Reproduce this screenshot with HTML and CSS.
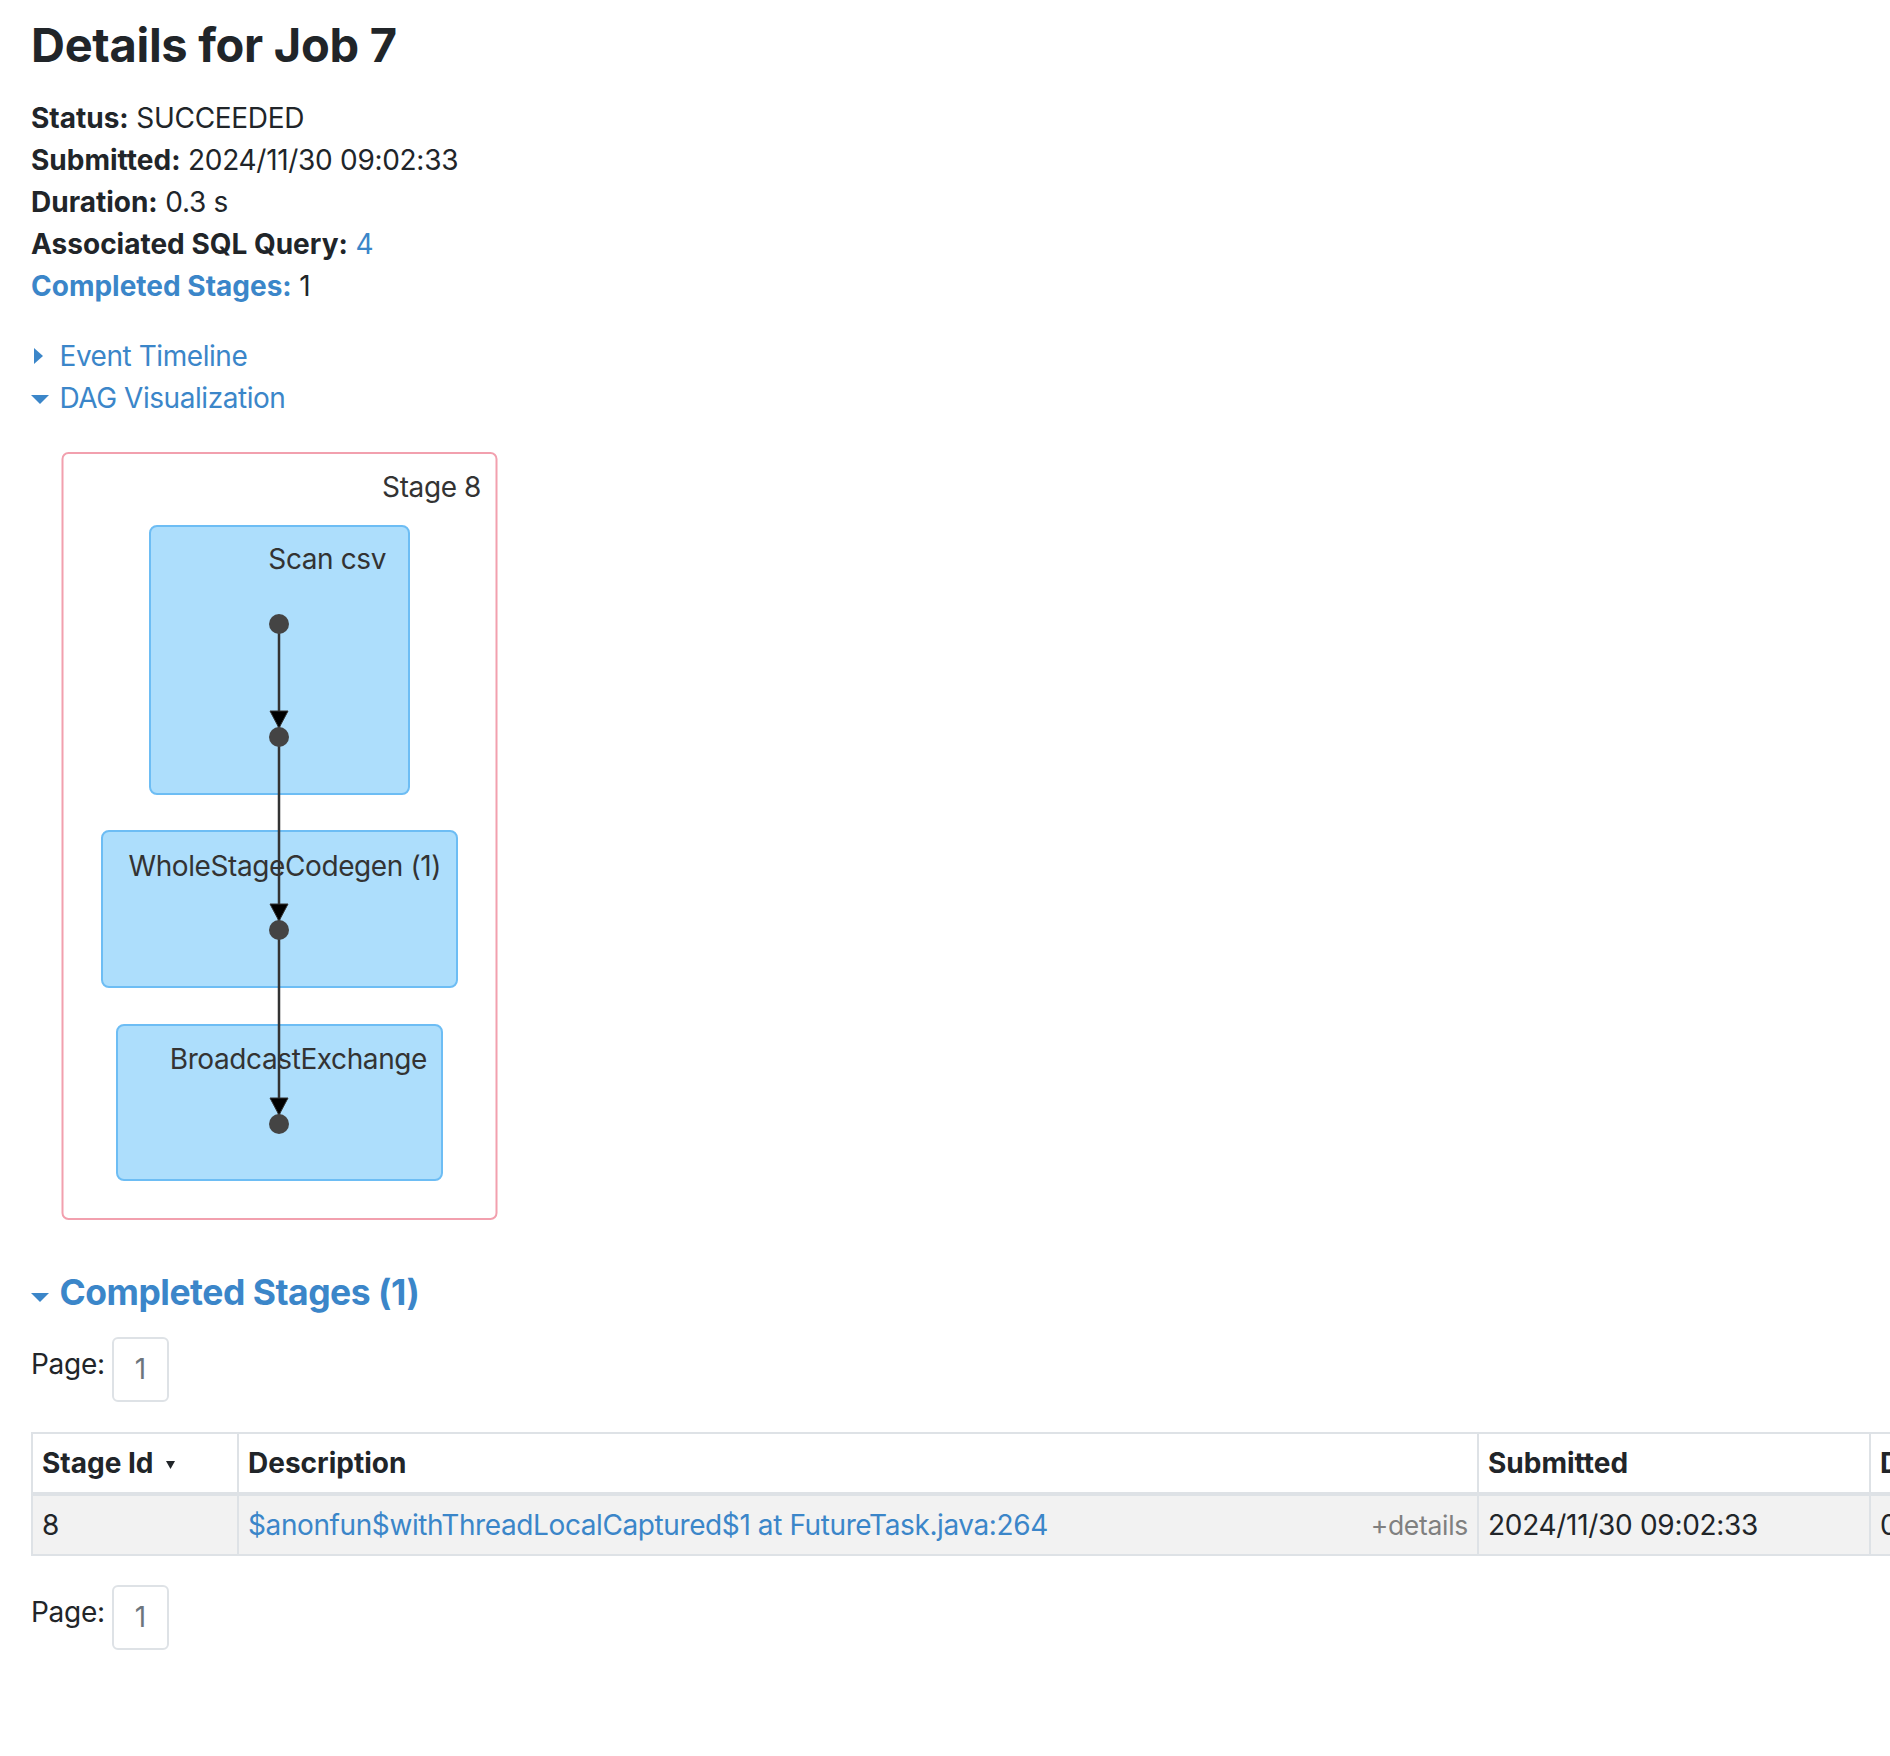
FILE: index.html
```html
<!DOCTYPE html>
<html lang="en">
<head>
<meta charset="utf-8">
<title>Details for Job 7</title>
<link rel="stylesheet" href="styles.css">
</head>
<body>
<div class="page">
  <h3 class="title">Details for Job 7</h3>
  <ul class="summary">
    <li><strong>Status:</strong> SUCCEEDED</li>
    <li><strong>Submitted:</strong> 2024/11/30 09:02:33</li>
    <li><strong>Duration:</strong> 0.3 s</li>
    <li><strong>Associated SQL Query:</strong> <a href="#">4</a></li>
    <li><a class="strong-link" href="#">Completed Stages:</a> 1</li>
  </ul>

  <div class="toggles">
    <div class="toggle">
      <span class="toggle-icon"><span class="arrow-closed"></span></span>
      <a href="#">Event Timeline</a>
    </div>
    <div class="toggle">
      <span class="toggle-icon"><span class="arrow-open"></span></span>
      <a href="#">DAG Visualization</a>
    </div>
  </div>

  <svg class="dag" width="500" height="822" viewBox="31 418 500 822" xmlns="http://www.w3.org/2000/svg">
    <rect class="stage" x="62.5" y="452" width="434" height="766" rx="6" ry="6"/>
    <text class="label" x="481" y="496" text-anchor="end">Stage 8</text>

    <rect class="cluster" x="150" y="525" width="259" height="268" rx="7" ry="7"/>
    <text class="label" x="386" y="568" text-anchor="end">Scan csv</text>

    <rect class="cluster" x="102" y="830" width="355" height="156" rx="7" ry="7"/>
    <text class="label" x="441" y="875" text-anchor="end">WholeStageCodegen (1)</text>

    <rect class="cluster" x="117" y="1024" width="325" height="155" rx="7" ry="7"/>
    <text class="label" x="427" y="1068" text-anchor="end">BroadcastExchange</text>

    <line class="edge" x1="279" y1="623" x2="279" y2="1123"/>
    <polygon class="head" points="270,710 288,710 279,727"/>
    <polygon class="head" points="270,903 288,903 279,920"/>
    <polygon class="head" points="270,1097 288,1097 279,1114"/>
    <circle class="node" cx="279" cy="623" r="10"/>
    <circle class="node" cx="279" cy="736" r="10"/>
    <circle class="node" cx="279" cy="929" r="10"/>
    <circle class="node" cx="279" cy="1123" r="10"/>
  </svg>

  <h4 class="section-title">
    <span class="toggle-icon heading-icon"><span class="arrow-open"></span></span>
    <a href="#">Completed Stages (1)</a>
  </h4>

  <div class="pager">
    <span class="pager-label">Page:</span>
    <span class="page-box">1</span>
  </div>

  <div class="table-wrap">
    <table class="stages">
      <colgroup>
        <col class="c-id">
        <col class="c-desc">
        <col class="c-sub">
        <col class="c-dur">
      </colgroup>
      <thead>
        <tr>
          <th>Stage Id<svg class="sort" width="9" height="8" viewBox="0 0 9 8"><polygon points="0,0 9,0 4.5,8"/></svg></th>
          <th>Description</th>
          <th>Submitted</th>
          <th>Duration</th>
        </tr>
      </thead>
      <tbody>
        <tr>
          <td>8</td>
          <td><span class="details">+details</span><a href="#">$anonfun$withThreadLocalCaptured$1 at FutureTask.java:264</a></td>
          <td>2024/11/30 09:02:33</td>
          <td>0.2 s</td>
        </tr>
      </tbody>
    </table>
  </div>

  <div class="pager pager-bottom">
    <span class="pager-label">Page:</span>
    <span class="page-box">1</span>
  </div>
</div>
</body>
</html>
```

FILE: styles.css
```css
* {
  box-sizing: border-box;
}

html,
body {
  margin: 0;
  padding: 0;
  background: #ffffff;
}

body {
  font-family: Inter, "Noto Sans", "Liberation Sans", sans-serif;
  font-size: 28px;
  line-height: 42px;
  letter-spacing: -0.3px;
  color: #212529;
}

a {
  color: #3b86c9;
  text-decoration: none;
}

.page {
  padding: 16px 0 80px 31px;
  overflow: hidden;
}

.title {
  font-size: 47px;
  line-height: 58.8px;
  font-weight: 700;
  letter-spacing: -0.3px;
  margin: 0 0 22px;
}

.summary {
  list-style: none;
  margin: 0;
  padding: 0;
}

.summary strong,
.strong-link {
  font-weight: 700;
  letter-spacing: 0;
}

.toggles {
  margin-top: 28px;
}

.toggle {
  display: flex;
  align-items: center;
}

.toggle a {
  letter-spacing: -0.45px;
}

.toggle-icon {
  width: 28.5px;
  display: flex;
  align-items: center;
  flex: none;
}

.arrow-closed {
  width: 0;
  height: 0;
  margin-left: 3px;
  border-top: 8.75px solid transparent;
  border-bottom: 8.75px solid transparent;
  border-left: 9px solid #3b86c9;
}

.arrow-open {
  width: 0;
  height: 0;
  margin-top: 3px;
  border-left: 9px solid transparent;
  border-right: 9px solid transparent;
  border-top: 9px solid #3b86c9;
}

.dag {
  display: block;
}

.dag .stage {
  fill: #ffffff;
  stroke: #f2a0ae;
  stroke-width: 2;
}

.dag .cluster {
  fill: #addefc;
  stroke: #6dbdf4;
  stroke-width: 2;
}

.dag .label {
  font-family: Inter, "Noto Sans", "Liberation Sans", sans-serif;
  font-size: 28px;
  letter-spacing: -0.4px;
  fill: #333333;
}

.dag .edge {
  stroke: #333333;
  stroke-width: 2.5;
}

.dag .head {
  fill: #000000;
  stroke: #333333;
  stroke-width: 1;
}

.dag .node {
  fill: #444444;
}

.section-title {
  display: flex;
  align-items: center;
  margin: 32px 0 23px;
  font-size: 35.5px;
  line-height: 40.8px;
  font-weight: 700;
  letter-spacing: -0.5px;
}

.heading-icon .arrow-open {
  margin-top: 8px;
}

.pager {
  display: flex;
  align-items: flex-start;
  gap: 7px;
}

.pager-label {
  margin-top: 6px;
}

.page-box {
  display: block;
  padding: 13px 21px;
  line-height: 35px;
  border: 2px solid #dee2e6;
  border-radius: 6px;
  color: #6c757d;
}

.table-wrap {
  margin-top: 30px;
  overflow: hidden;
}

.stages {
  border-collapse: collapse;
  table-layout: fixed;
  width: 2100px;
}

.c-id { width: 206px; }
.c-desc { width: 1240px; }
.c-sub { width: 392px; }
.c-dur { width: 262px; }

.stages th,
.stages td {
  border: 2px solid #dee2e6;
  padding: 8px 9px;
  text-align: left;
  vertical-align: top;
  white-space: nowrap;
}

.stages th {
  font-weight: 700;
  letter-spacing: 0;
  background: #ffffff;
}

.stages td a {
  letter-spacing: -0.4px;
}

.stages thead th {
  border-bottom-width: 4px;
}

.stages tbody tr {
  background: #f2f2f2;
}

.sort {
  margin-left: 12px;
  vertical-align: 4px;
  fill: #212529;
}

.details {
  float: right;
  font-size: 26.5px;
  line-height: 42px;
  letter-spacing: -0.3px;
  color: #808080;
}

.pager-bottom {
  margin-top: 29px;
}
```
